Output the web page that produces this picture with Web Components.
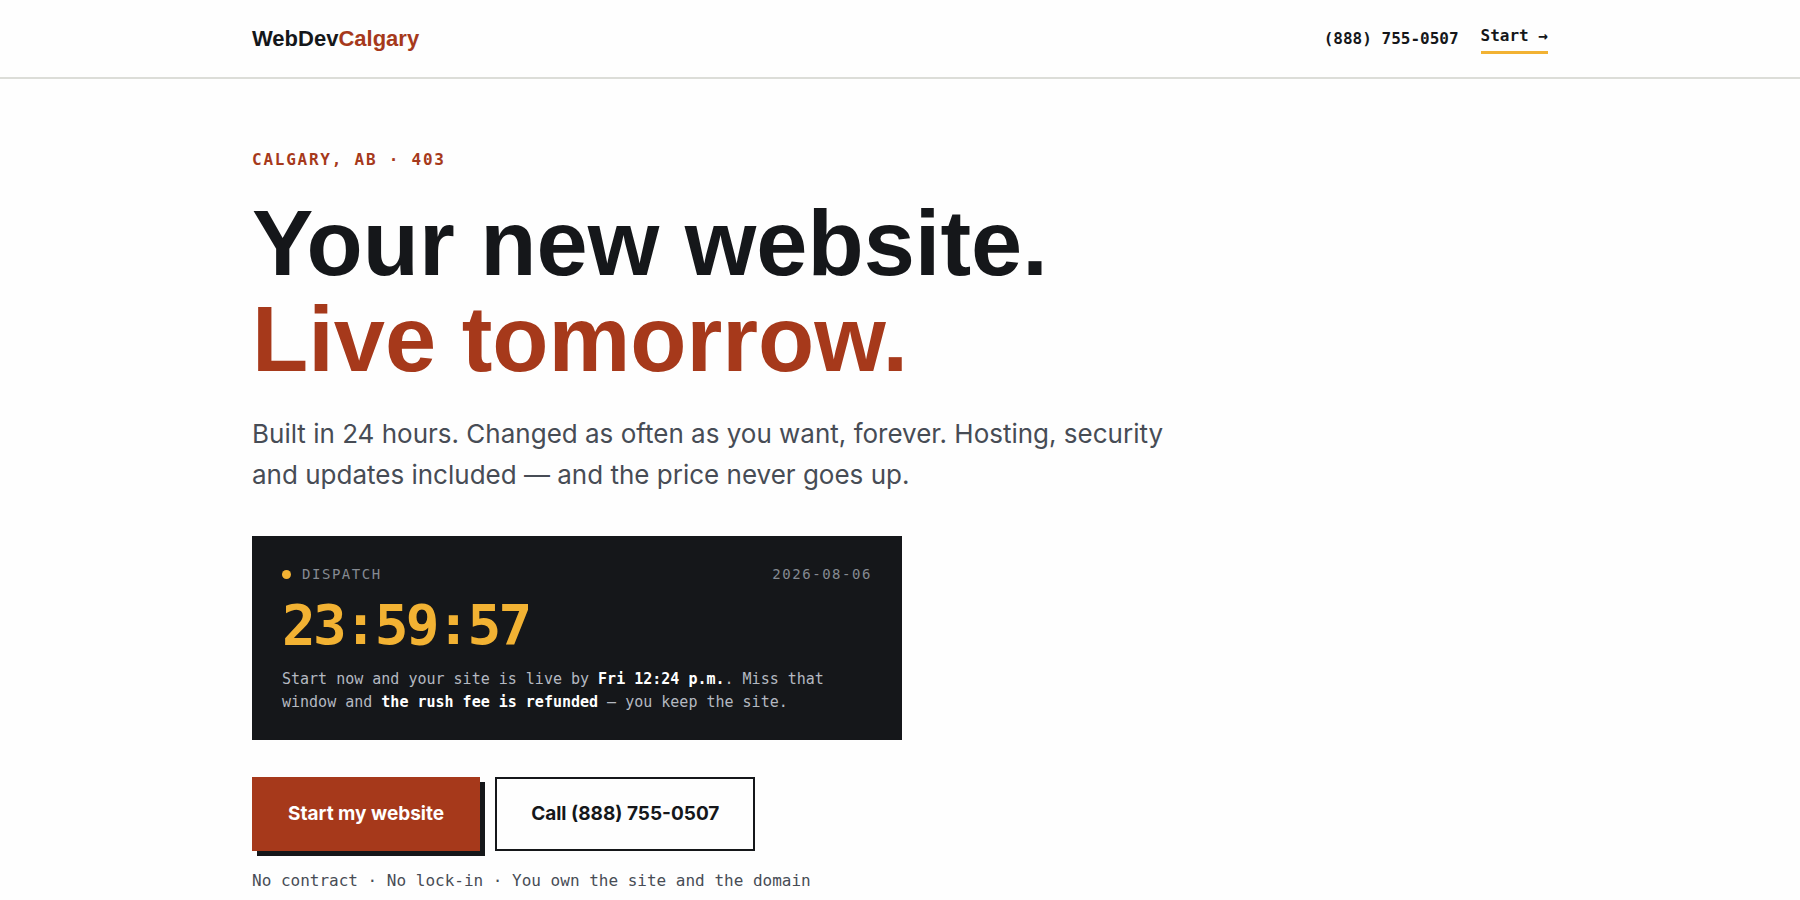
<!DOCTYPE html>
<html lang="en-CA">
<head>
<meta charset="utf-8">
<meta name="viewport" content="width=device-width, initial-scale=1">
<title>WebDevCalgary</title>
<style>
  :root {
    --ink: #15171a;
    --rust: #a6391b;
    --amber: #f2b233;
    --slate: #474c55;
    --paper: #fefefe;
    --line: #dcddd8;
    --display: "Liberation Sans", Arial, sans-serif;
    --body: Inter, sans-serif;
    --mono: "DejaVu Sans Mono", monospace;
    --page: 1296px;
  }

  body {
    margin: 0;
    background: var(--paper);
    color: var(--ink);
    font-family: var(--body);
  }
</style>
</head>
<body>
<site-header phone="(888) 755-0507"></site-header>

<main>
  <hero-section>
    <span slot="eyebrow">CALGARY, AB · 403</span>
    <span slot="title">Your new website.</span>
    <span slot="accent">Live tomorrow.</span>
    <span slot="lead">Built in 24 hours. Changed as often as you want, forever. Hosting, security and updates included — and the price never goes up.</span>

    <dispatch-card label="DISPATCH" date="2026-08-06" time="23:59:57">
      Start now and your site is live by <strong>Fri 12:24 p.m.</strong>. Miss that window and <strong>the rush fee is refunded</strong> — you keep the site.
    </dispatch-card>

    <action-link slot="actions" variant="primary" href="#start">Start my website</action-link>
    <action-link slot="actions" variant="outline" href="tel:+18887550507">Call (888) 755-0507</action-link>

    <span slot="note">No contract · No lock-in · You own the site and the domain</span>
  </hero-section>
</main>

<script>
class SiteHeader extends HTMLElement {
  connectedCallback() {
    const phone = this.getAttribute('phone');

    this.attachShadow({ mode: 'open' });
    this.shadowRoot.innerHTML = `
      <style>
        :host {
          display: block;
          border-bottom: 2px solid var(--line);
        }

        header {
          display: flex;
          align-items: center;
          justify-content: space-between;
          box-sizing: border-box;
          min-height: 77px;
          max-width: var(--page);
          margin: 0 auto;
        }

        a {
          color: inherit;
          text-decoration: none;
        }

        .logo {
          font: bold 22px/28px var(--display);
        }

        .logo span {
          color: var(--rust);
        }

        nav {
          display: flex;
          align-items: center;
          gap: 22px;
          font: bold 16px/24px var(--mono);
        }

        .start {
          padding-bottom: 3px;
          border-bottom: 3px solid var(--amber);
        }
      </style>

      <header>
        <a class="logo" href="#">WebDev<span>Calgary</span></a>
        <nav>
          <a href="tel:+18887550507">${phone}</a>
          <a class="start" href="#start">Start →</a>
        </nav>
      </header>
    `;
  }
}

class HeroSection extends HTMLElement {
  connectedCallback() {
    this.attachShadow({ mode: 'open' });
    this.shadowRoot.innerHTML = `
      <style>
        :host {
          display: block;
          max-width: var(--page);
          margin: 0 auto;
          padding: 69px 0 0;
        }

        p, h1 {
          margin: 0;
        }

        .eyebrow {
          color: var(--rust);
          font: bold 16px/24px var(--mono);
          letter-spacing: 0.11em;
        }

        h1 {
          margin-top: 23px;
          font: bold 92px/96px var(--display);
        }

        h1 slot {
          display: block;
        }

        .accent {
          color: var(--rust);
        }

        .lead {
          max-width: 920px;
          margin-top: 26px;
          color: var(--slate);
          font-size: 26px;
          line-height: 41px;
        }

        .card {
          max-width: 650px;
          margin-top: 41px;
        }

        .actions {
          display: flex;
          flex-wrap: wrap;
          gap: 15px;
          margin-top: 37px;
        }

        .note {
          margin-top: 18px;
          color: var(--slate);
          font: 16px/24px var(--mono);
        }
      </style>

      <p class="eyebrow"><slot name="eyebrow"></slot></p>
      <h1>
        <slot name="title"></slot>
        <slot class="accent" name="accent"></slot>
      </h1>
      <p class="lead"><slot name="lead"></slot></p>
      <div class="card"><slot></slot></div>
      <div class="actions"><slot name="actions"></slot></div>
      <p class="note"><slot name="note"></slot></p>
    `;
  }
}

class DispatchCard extends HTMLElement {
  connectedCallback() {
    const label = this.getAttribute('label');
    const date = this.getAttribute('date');
    const time = this.getAttribute('time');

    this.attachShadow({ mode: 'open' });
    this.shadowRoot.innerHTML = `
      <style>
        :host {
          display: block;
          padding: 28px 30px 26px;
          background: var(--ink);
          color: #b4b9c1;
          font-family: var(--mono);
        }

        .top {
          display: flex;
          justify-content: space-between;
          color: #858a92;
          font-size: 14px;
          line-height: 20px;
          letter-spacing: 0.11em;
        }

        .label {
          display: flex;
          align-items: center;
          gap: 11px;
        }

        .dot {
          width: 9px;
          height: 9px;
          border-radius: 50%;
          background: var(--amber);
        }

        .clock {
          margin: 11px 0 13px;
          color: var(--amber);
          font-size: 56px;
          font-weight: bold;
          line-height: 60px;
          letter-spacing: -0.05em;
        }

        p {
          margin: 0;
          font-size: 15px;
          line-height: 23px;
        }

        ::slotted(strong) {
          color: #fff;
        }
      </style>

      <div class="top">
        <span class="label"><span class="dot"></span>${label}</span>
        <time datetime="${date}">${date}</time>
      </div>
      <div class="clock" role="timer">${time}</div>
      <p><slot></slot></p>
    `;
  }
}

class ActionLink extends HTMLElement {
  connectedCallback() {
    const href = this.getAttribute('href');

    this.attachShadow({ mode: 'open' });
    this.shadowRoot.innerHTML = `
      <style>
        :host {
          display: block;
        }

        a {
          display: block;
          padding: 23px 34px;
          border: 2px solid var(--ink);
          color: var(--ink);
          font: bold 19px/24px var(--body);
          text-decoration: none;
        }

        :host([variant="primary"]) a {
          border-color: var(--rust);
          background: var(--rust);
          box-shadow: 5px 5px 0 var(--ink);
          color: #fff;
        }
      </style>

      <a href="${href}"><slot></slot></a>
    `;
  }
}

customElements.define('site-header', SiteHeader);
customElements.define('hero-section', HeroSection);
customElements.define('dispatch-card', DispatchCard);
customElements.define('action-link', ActionLink);
</script>
</body>
</html>
